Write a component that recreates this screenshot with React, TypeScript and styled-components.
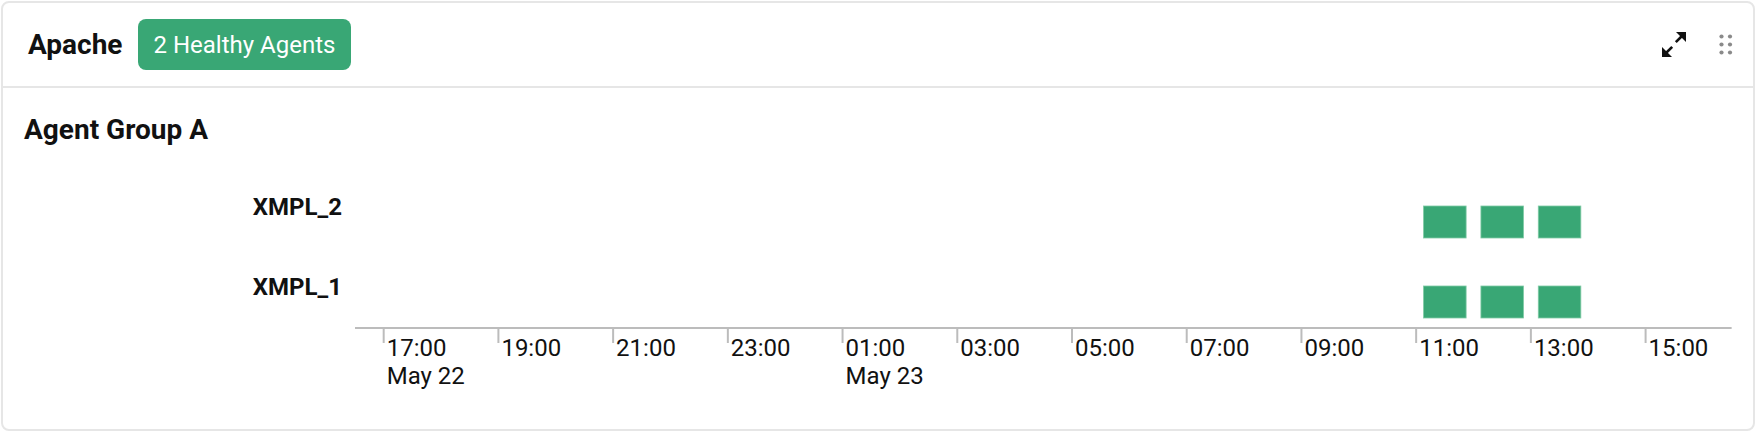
import React from "react";
import styled, { createGlobalStyle } from "styled-components";

const GlobalStyle = createGlobalStyle`
  html, body { margin: 0; padding: 0; background: #ffffff; }
  body { font-family: Roboto, "Liberation Sans", Arial, sans-serif; color: #111; }
  * { box-sizing: border-box; }
`;

const Card = styled.section`
  margin: 1px;
  width: 1754px;
  height: 430px;
  border: 2px solid #e6e6e6;
  border-radius: 8px;
  background: #fff;
  display: flex;
  flex-direction: column;
  overflow: hidden;
`;

const Header = styled.header`
  height: 85px;
  flex: none;
  display: flex;
  align-items: center;
  padding: 0 20px 0 25px;
  border-bottom: 2px solid #e6e6e6;
`;

const Title = styled.h2`
  margin: 0;
  font-size: 28px;
  font-weight: 700;
  color: #111;
  letter-spacing: 0;
`;

const Badge = styled.span`
  margin-left: 15px;
  height: 51px;
  display: inline-flex;
  align-items: center;
  padding: 0 16px;
  border-radius: 8px;
  background: #39a775;
  color: #fff;
  font-size: 24px;
  font-weight: 400;
`;

const Spacer = styled.div`
  flex: 1;
`;

const IconButton = styled.button<{ $w: number }>`
  border: none;
  background: transparent;
  padding: 0;
  margin: 0;
  display: flex;
  align-items: center;
  justify-content: center;
  cursor: pointer;
  width: ${(p) => p.$w}px;
  height: 26px;
`;

const Icons = styled.div`
  display: flex;
  align-items: center;
  gap: 33px;
`;

const Body = styled.div`
  flex: 1;
  display: flex;
  flex-direction: column;
  padding: 25px 0 0 21px;
`;

const GroupTitle = styled.h3`
  margin: 0;
  font-size: 28px;
  line-height: 33px;
  font-weight: 700;
  color: #111;
`;

const Plot = styled.svg`
  display: block;
  margin-top: 1px;
  font-family: Roboto, "Liberation Sans", Arial, sans-serif;
`;

const ExpandIcon = () => (
  <svg width="24" height="25" viewBox="0 0 24 25">
    <polygon points="14,0 24,0 24,10" fill="#111" />
    <line x1="20" y1="4" x2="13.8" y2="10.2" stroke="#111" strokeWidth="2.6" />
    <polygon points="0,15 0,25 10,25" fill="#111" />
    <line x1="4" y1="21" x2="10.2" y2="14.8" stroke="#111" strokeWidth="2.6" />
  </svg>
);

const DragIcon = () => (
  <svg width="14" height="22" viewBox="0 0 14 22">
    {[2.5, 11].map((cx) =>
      [2.5, 10.5, 18.5].map((cy) => (
        <circle key={`${cx}-${cy}`} cx={cx} cy={cy} r="2.1" fill="#8a8a8a" />
      ))
    )}
  </svg>
);

// Plot coordinates: svg origin at page (24, 147)
const OX = 24;
const OY = 147;
const AXIS_START = 355;
const HOUR = 57.36;
const AXIS_END = AXIS_START + 24 * HOUR;
const AXIS_Y = 328;

const rows = [
  { name: "XMPL_2", baseline: 215, barTop: 206, hours: [18.5, 19.5, 20.5] },
  { name: "XMPL_1", baseline: 295, barTop: 286, hours: [18.5, 19.5, 20.5] },
];

const ticks = [
  { t: "17:00", d: "May 22" },
  { t: "19:00" },
  { t: "21:00" },
  { t: "23:00" },
  { t: "01:00", d: "May 23" },
  { t: "03:00" },
  { t: "05:00" },
  { t: "07:00" },
  { t: "09:00" },
  { t: "11:00" },
  { t: "13:00" },
  { t: "15:00" },
];

const Timeline = () => (
  <Plot width={1730} height={280} viewBox={`0 0 1730 280`}>
    <g transform={`translate(${-OX},${-OY})`}>
      {rows.map((r) => (
        <g key={r.name}>
          <text
            x={342}
            y={r.baseline}
            textAnchor="end"
            fontSize="24"
            fontWeight="700"
            fill="#111"
          >
            {r.name}
          </text>
          {r.hours.map((h) => (
            <rect
              key={h}
              x={AXIS_START + h * HOUR + 7.4}
              y={r.barTop}
              width={HOUR - 14.8}
              height={32}
              fill="#39a775"
              stroke="#7fcaa5"
              strokeWidth="0.8"
            />
          ))}
        </g>
      ))}
      <line x1={AXIS_START} y1={AXIS_Y} x2={AXIS_END} y2={AXIS_Y} stroke="#bcbcbc" strokeWidth="2" />
      {ticks.map((tk, i) => {
        const x = AXIS_START + (0.5 + 2 * i) * HOUR;
        return (
          <g key={tk.t}>
            <line x1={x} y1={AXIS_Y} x2={x} y2={AXIS_Y + 15} stroke="#bcbcbc" strokeWidth="2" />
            <text x={x + 3} y={356} fontSize="24" fill="#111">
              {tk.t}
            </text>
            {tk.d && (
              <text x={x + 3} y={384} fontSize="24" fill="#111">
                {tk.d}
              </text>
            )}
          </g>
        );
      })}
    </g>
  </Plot>
);

export default function App() {
  return (
    <>
      <GlobalStyle />
      <Card>
        <Header>
          <Title>Apache</Title>
          <Badge>2 Healthy Agents</Badge>
          <Spacer />
          <Icons>
            <IconButton $w={24} aria-label="Expand">
              <ExpandIcon />
            </IconButton>
            <IconButton $w={14} aria-label="Drag">
              <DragIcon />
            </IconButton>
          </Icons>
        </Header>
        <Body>
          <GroupTitle>Agent Group A</GroupTitle>
          <Timeline />
        </Body>
      </Card>
    </>
  );
}
